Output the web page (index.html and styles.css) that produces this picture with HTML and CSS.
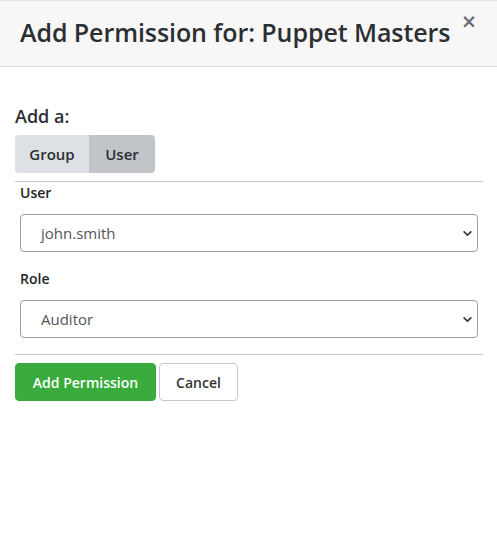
FILE: index.html
```html
<!DOCTYPE html>
<html>
<head>
<meta charset="utf-8">
<link rel="stylesheet" href="styles.css">
</head>
<body>
<div class="modal">
  <div class="modal-header">
    <h1 class="title">Add Permission for: Puppet Masters</h1>
    <button class="close">&times;</button>
  </div>
  <div class="modal-body">
    <div class="add-label">Add a:</div>
    <div class="btn-group">
      <button class="seg">Group</button>
      <button class="seg active">User</button>
    </div>
    <hr class="divider">
    <div class="fields">
      <label class="field-label">User</label>
      <div class="select">
        <span>john.smith</span>
        <svg class="chev" width="9" height="9" viewBox="0 0 16 16"><path d="M2 5l6 6 6-6" fill="none" stroke="#343a40" stroke-width="3" stroke-linecap="round" stroke-linejoin="round"/></svg>
      </div>
      <label class="field-label">Role</label>
      <div class="select">
        <span>Auditor</span>
        <svg class="chev" width="9" height="9" viewBox="0 0 16 16"><path d="M2 5l6 6 6-6" fill="none" stroke="#343a40" stroke-width="3" stroke-linecap="round" stroke-linejoin="round"/></svg>
      </div>
    </div>
    <hr class="divider">
    <div class="actions">
      <button class="btn btn-success">Add Permission</button>
      <button class="btn btn-default">Cancel</button>
    </div>
  </div>
</div>
</body>
</html>
```
FILE: styles.css
```css
* { box-sizing: border-box; }
html, body { margin: 0; padding: 0; background: #fff; }
body { font-family: "Open Sans", "Noto Sans", sans-serif; color: #333; }
.modal-header {
  background: #f7f7f7;
  border-top: 1px solid #e3e3e3;
  border-bottom: 1px solid #dcdcdc;
  height: 67px;
  display: flex;
  align-items: flex-start;
  justify-content: space-between;
  padding: 0 20px 0 20px;
}
.title {
  margin: 12px 0 0 0;
  font-size: 25px;
  font-weight: 600;
  color: #2b2f33;
  line-height: 38px;
  letter-spacing: -0.08px;
}
.close {
  background: none;
  border: 0;
  padding: 0;
  margin-top: 7px;
  margin-right: 0;
  font-size: 19px;
  font-weight: 700;
  color: #6b6f75;
  line-height: 26px;
  font-family: "DejaVu Sans", sans-serif;
}
.modal-body { padding: 36px 14px 0 15px; }
.add-label { font-size: 18px; font-weight: 600; color: #2b2f33; line-height: 26px; }
.btn-group { display: flex; margin-top: 6px; }
.seg {
  font-family: inherit;
  font-size: 15px;
  font-weight: 600;
  color: #2b2f33;
  border: 0;
  height: 38px;
  padding: 0;
  background: #dde0e4;
}
.seg:first-child { border-radius: 4px 0 0 4px; width: 74px; }
.seg.active { background: #c0c4c9; border-radius: 0 4px 4px 0; width: 66px; }
.divider { border: 0; border-top: 1px solid #c8c8c8; margin: 8px 0 0 0; }
.fields { padding: 0 5px; display: flex; flex-direction: column; }
.field-label { font-size: 14px; font-weight: 600; color: #212529; margin-top: 1px; line-height: 20px; }
.field-label + .select { margin-top: 11px; }
.select + .field-label { margin-top: 17px; }
.select {
  height: 38px;
  border: 1px solid #9aa0a6;
  border-radius: 4px;
  display: flex;
  align-items: center;
  justify-content: space-between;
  padding: 0 5px 0 20px;
  font-size: 15px;
  color: #555;
}
.fields + .divider { margin-top: 16px; }
.actions { display: flex; gap: 3px; margin-top: 8px; }
.btn {
  font-family: inherit;
  font-size: 14px;
  font-weight: 600;
  height: 38px;
  border-radius: 4px;
  padding: 0;
}
.btn-success { background: #38ab3c; color: #fff; border: 1px solid #38ab3c; width: 141px; }
.btn-default { background: #fff; color: #333; border: 1px solid #c6c8cb; width: 79px; }
```
